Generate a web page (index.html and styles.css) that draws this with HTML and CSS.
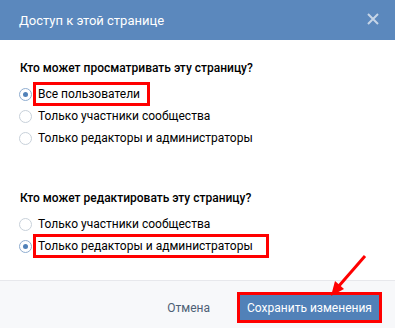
FILE: index.html
```html
<!DOCTYPE HTML>
<html>

<head>
  <title>Доступ к этой странице</title>
  <meta charset="utf-8" />
  <link rel="stylesheet" href="styles.css">
</head>

<body>
<div class="box">
  <div class="box-head">
    <span class="box-title">Доступ к этой странице</span>
    <svg class="box-close" width="12" height="12" viewBox="0 0 12 12">
      <path d="M1 1L11 11M11 1L1 11" stroke="#c6d5e7" stroke-width="2" fill="none" />
    </svg>
  </div>

  <div class="box-body">
    <div class="group">
      <div class="group-title">Кто может просматривать эту страницу?</div>
      <label class="option"><span class="radio on"></span><span class="mark short">Все пользователи</span></label>
      <label class="option"><span class="radio"></span>Только участники сообщества</label>
      <label class="option"><span class="radio"></span>Только редакторы и администраторы</label>
    </div>

    <div class="group second">
      <div class="group-title">Кто может редактировать эту страницу?</div>
      <label class="option"><span class="radio"></span>Только участники сообщества</label>
      <label class="option"><span class="radio on"></span><span class="mark wide">Только редакторы и администраторы</span></label>
    </div>
  </div>

  <div class="box-foot">
    <a class="cancel" href="#">Отмена</a>
    <button class="save">Сохранить изменения</button>
    <!-- стрелка-пометка поверх кнопки -->
    <svg class="arrow" width="40" height="44" viewBox="0 0 40 44">
      <path d="M36 2L9 33" stroke="#f00" stroke-width="3" fill="none" />
      <polygon points="2,42 6,27 15,35" fill="#f00" />
    </svg>
  </div>
</div>
</body>

</html>
```

FILE: styles.css
```css
* {
  margin: 0;
  padding: 0;
  box-sizing: border-box;
}

body {
  font-family: Roboto, "Open Sans", Arial, sans-serif;
  font-size: 12px;
  color: #000;
  background: #fff;
}

.box {
  width: 395px;
  position: relative;
}

.box-head {
  height: 40px;
  background-color: #5b88bd;
  display: flex;
  align-items: center;
  justify-content: space-between;
  padding: 0 16px 0 19px;
}

.box-title {
  color: #fff;
  font-size: 13px;
}

.box-close {
  display: block;
  margin-top: -2px;
}

.box-body {
  padding: 20px 20px 23px;
}

.group.second {
  margin-top: 41px;
}

.group-title {
  font-weight: 500;
  line-height: 16px;
  margin-bottom: 7px;
}

.option {
  display: flex;
  align-items: center;
  height: 22px;
}

.radio {
  width: 13px;
  height: 13px;
  border: 1px solid #c8d1da;
  border-radius: 50%;
  margin: 0 6px 0 -1px;
  position: relative;
  flex: none;
}

.radio.on {
  border-color: #8fadd0;
}

.radio.on::after {
  content: "";
  position: absolute;
  left: 3px;
  top: 3px;
  width: 5px;
  height: 5px;
  border-radius: 50%;
  background-color: #5181b8;
}

.mark {
  outline: 3px solid #f00;
  outline-offset: 2px;
}

.mark.short {
  padding-right: 5px;
}

.mark.wide {
  padding-right: 11px;
}

.box-foot {
  border-top: 1px solid #e7e8ec;
  background-color: #f7f8fa;
  display: flex;
  align-items: center;
  justify-content: flex-end;
  padding: 11px 13px 12px;
  gap: 27px;
  position: relative;
}

.cancel {
  color: #4d5f75;
  text-decoration: none;
}

.save {
  font-family: inherit;
  font-size: 12px;
  color: #fff;
  background-color: #5181b8;
  border: none;
  width: 145px;
  height: 31px;
  outline: 3px solid #f00;
  outline-offset: -3px;
}

.arrow {
  position: absolute;
  left: 329px;
  top: -27px;
}
```
